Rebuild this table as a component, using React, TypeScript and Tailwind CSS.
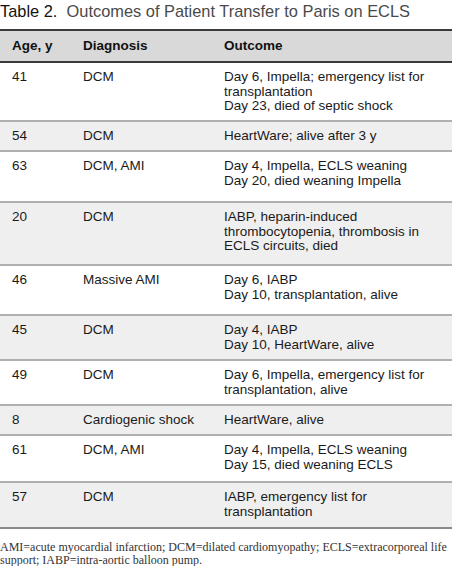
const rows = [
  { age: "41", dx: "DCM", out: ["Day 6, Impella; emergency list for", "transplantation", "Day 23, died of septic shock"], h: "h-[59px]" },
  { age: "54", dx: "DCM", out: ["HeartWare; alive after 3 y"], h: "h-[30px]" },
  { age: "63", dx: "DCM, AMI", out: ["Day 4, Impella, ECLS weaning", "Day 20, died weaning Impella"], h: "h-[51px]" },
  { age: "20", dx: "DCM", out: ["IABP, heparin-induced", "thrombocytopenia, thrombosis in", "ECLS circuits, died"], h: "h-[63px]" },
  { age: "46", dx: "Massive AMI", out: ["Day 6, IABP", "Day 10, transplantation, alive"], h: "h-[50px]" },
  { age: "45", dx: "DCM", out: ["Day 4, IABP", "Day 10, HeartWare, alive"], h: "h-[45px]" },
  { age: "49", dx: "DCM", out: ["Day 6, Impella, emergency list for", "transplantation, alive"], h: "h-[45px]" },
  { age: "8", dx: "Cardiogenic shock", out: ["HeartWare, alive"], h: "h-[30px]" },
  { age: "61", dx: "DCM, AMI", out: ["Day 4, Impella, ECLS weaning", "Day 15, died weaning ECLS"], h: "h-[47px]" },
  { age: "57", dx: "DCM", out: ["IABP, emergency list for", "transplantation"], h: "h-[46px]" },
]

export default function App() {
  return (
    <div className="w-[452px] h-[566px] overflow-hidden bg-white font-['Liberation_Sans',Arial,sans-serif]">
      <h1 className="h-[29px] pt-[1px] text-[16.4px] leading-[20px] whitespace-nowrap">
        <span className="text-[#111]">Table 2.</span>
        <span className="text-[#4a4a4a]">&nbsp; Outcomes of Patient Transfer to Paris on ECLS</span>
      </h1>

      <table className="w-full border-collapse text-[13.5px] leading-[14.6px] text-[#1a1a1a]">
        <thead>
          <tr className="h-[32px] bg-[#d9d9d9] border-t-2 border-b-2 border-[#3a3a3a] text-left font-bold text-[#111]">
            <th className="w-[83px] pl-[12px] font-bold">Age, y</th>
            <th className="w-[141px] font-bold">Diagnosis</th>
            <th className="font-bold">Outcome</th>
          </tr>
        </thead>
        <tbody>
          {rows.map((r, i) => (
            <tr
              key={i}
              className={`${r.h} align-top border-b-2 ${i === rows.length - 1 ? "border-[#8a8a8a]" : "border-[#b0b0b0]"} ${i % 2 === 1 ? "bg-[#efefef]" : "bg-white"}`}
            >
              <td className="pl-[12px] pt-[7px]">{r.age}</td>
              <td className="pt-[7px]">{r.dx}</td>
              <td className="pt-[7px]">
                {r.out.map((l, j) => (
                  <div key={j}>{l}</div>
                ))}
              </td>
            </tr>
          ))}
        </tbody>
      </table>

      <p className="mt-[12px] font-['Liberation_Serif','Times_New_Roman',serif] text-[12px] leading-[13px] text-[#333]">
        AMI=acute myocardial infarction; DCM=dilated cardiomyopathy; ECLS=extracorporeal life support; IABP=intra-aortic balloon pump.
      </p>
    </div>
  )
}
